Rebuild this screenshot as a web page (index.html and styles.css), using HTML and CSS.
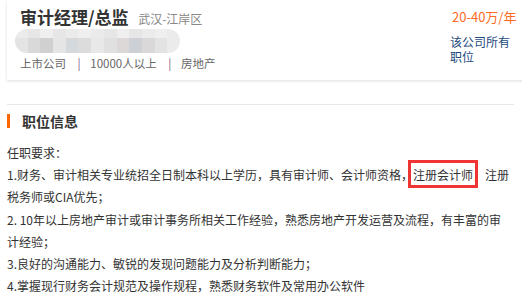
FILE: index.html
```html
<!DOCTYPE html>
<html lang="zh-CN">
<head>
    <meta charset="UTF-8">
    <title>审计经理/总监</title>
    <link rel="stylesheet" href="styles.css">
</head>
<body>

<!-- ===== JOB HEADER CARD ===== -->
<div class="job_card">
    <div class="job_main">
        <div class="title_row">
            <span class="job_title">审计经理/总监</span>
            <span class="job_place">武汉-江岸区</span>
        </div>

        <div class="blur_name">
            <div class="blur_row top">
                <span></span><span></span><span></span><span></span><span></span><span></span><span></span><span></span><span></span><span></span><span></span><span></span><span></span>
            </div>
            <div class="blur_row bottom">
                <span></span><span></span><span></span><span></span><span></span><span></span><span></span><span></span><span></span><span></span><span></span><span></span><span></span>
            </div>
        </div>

        <div class="company_meta">
            <span>上市公司</span>
            <span class="sep">|</span>
            <span>10000人以上</span>
            <span class="sep">|</span>
            <span>房地产</span>
        </div>
    </div>

    <div class="job_side">
        <div class="salary">20-40万/年</div>
        <a class="all_jobs" href="#">该公司所有职位</a>
    </div>
</div>

<!-- ===== JOB DESCRIPTION ===== -->
<div class="job_info">
    <h4 class="section_title">职位信息</h4>

    <div class="job_desc">
        任职要求：<br>
        1.财务、审计相关专业统招全日制本科以上学历，具有审计师、会计师资格，<span class="marked">注册会计师</span>，注册税务师或CIA优先；<br>
        2. 10年以上房地产审计或审计事务所相关工作经验，熟悉房地产开发运营及流程，有丰富的审计经验；<br>
        3.良好的沟通能力、敏锐的发现问题能力及分析判断能力；<br>
        4.掌握现行财务会计规范及操作规程，熟悉财务软件及常用办公软件
    </div>
</div>

</body>
</html>
```

FILE: styles.css
```css
body {
    margin: 0;
    font-family: "Noto Sans CJK SC", "Microsoft YaHei", sans-serif;
    background-color: #fff;
    color: #333;
    overflow: hidden;
}

/* ===== Header card ===== */
.job_card {
    display: flex;
    justify-content: space-between;
    height: 80px;
    margin-left: 7px;
    margin-right: -10px;
    background-color: #fff;
    box-shadow: 0 1px 3px rgba(0, 0, 0, 0.14);
}

.job_main {
    padding-left: 13px;
    padding-top: 7px;
}

.title_row {
    height: 20px;
    line-height: 20px;
    white-space: nowrap;
}

.job_title {
    font-size: 17px;
    font-weight: bold;
    color: #333;
}

.job_place {
    font-size: 12px;
    color: #888;
    margin-left: 6px;
}

.blur_name {
    width: 165px;
    height: 24px;
    margin-top: 2px;
    margin-left: -5px;
    border-radius: 12px;
    overflow: hidden;
    filter: blur(0.6px);
}

.blur_row {
    display: flex;
}

.blur_row span {
    flex: 1;
}

.blur_row.top {
    height: 9px;
}

.blur_row.bottom {
    height: 15px;
}

.blur_row.top span { background-color: #ebebeb; }
.blur_row.top span:nth-child(2n) { background-color: #e6e6e6; }
.blur_row.top span:nth-child(3n) { background-color: #efefef; }

.blur_row.bottom span:nth-child(1) { background-color: #e4e4e4; }
.blur_row.bottom span:nth-child(2) { background-color: #d9d9d9; }
.blur_row.bottom span:nth-child(3) { background-color: #d0d0d0; }
.blur_row.bottom span:nth-child(4) { background-color: #e5e5e5; }
.blur_row.bottom span:nth-child(5) { background-color: #d6d9db; }
.blur_row.bottom span:nth-child(6) { background-color: #dcdcdc; }
.blur_row.bottom span:nth-child(7) { background-color: #e8e8e8; }
.blur_row.bottom span:nth-child(8) { background-color: #e0e0e0; }
.blur_row.bottom span:nth-child(9) { background-color: #ddd8d8; }
.blur_row.bottom span:nth-child(10) { background-color: #cdd0d4; }
.blur_row.bottom span:nth-child(11) { background-color: #dad8d8; }
.blur_row.bottom span:nth-child(12) { background-color: #e3e3e3; }
.blur_row.bottom span:nth-child(13) { background-color: #ebebeb; }

.company_meta {
    margin-top: 3px;
    font-size: 11.5px;
    line-height: 14px;
    color: #666;
    white-space: nowrap;
}

.company_meta .sep {
    color: #7b5a88;
    margin: 0 7px 0 9px;
}

.job_side {
    width: 64px;
    margin-right: 18px;
    padding-top: 7px;
}

.salary {
    font-size: 13px;
    line-height: 20px;
    color: #fe6a21;
    padding-left: 2px;
    white-space: nowrap;
}

.all_jobs {
    display: block;
    margin-top: 7px;
    font-size: 12px;
    line-height: 15px;
    color: #1d4a7e;
    text-decoration: none;
}

/* ===== Job info ===== */
.job_info {
    margin: 24px 8px 0 7px;
    border-top: 1px solid #e8e8e8;
}

.section_title {
    margin: 9px 0 0 0;
    height: 14px;
    line-height: 14px;
    font-size: 14px;
    font-weight: bold;
    color: #333;
    border-left: 3px solid #ff6600;
    padding-left: 12px;
}

.job_desc {
    margin-top: 14px;
    margin-right: 3px;
    font-size: 12px;
    line-height: 22.2px;
    color: #333;
}

.marked {
    position: relative;
}

.marked::after {
    content: "";
    position: absolute;
    left: -5px;
    right: -5px;
    top: -6px;
    bottom: -5px;
    border: 3px solid #ef3434;
}
```
